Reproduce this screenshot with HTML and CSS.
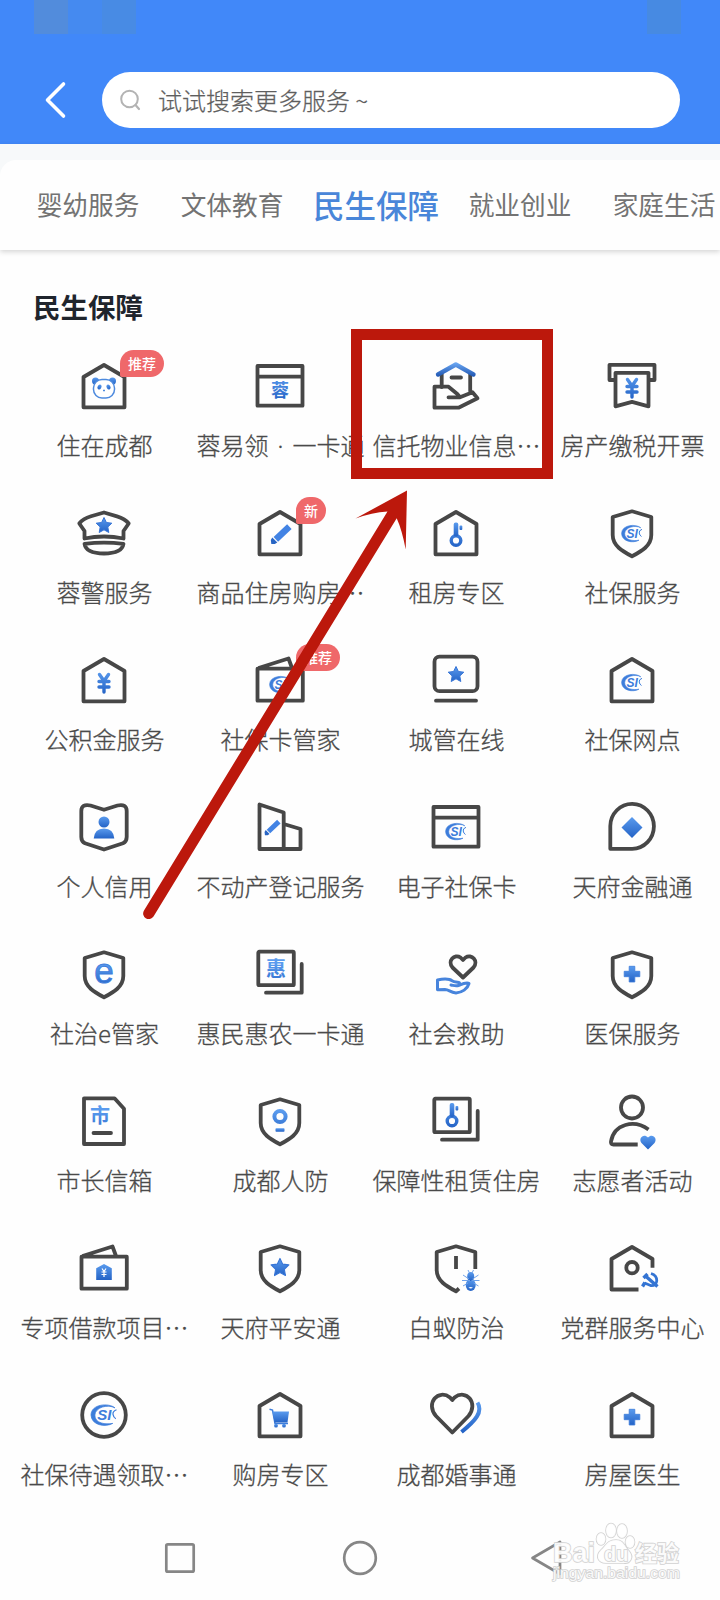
FILE: index.html
```html
<!DOCTYPE html>
<html lang="zh-CN">
<head>
<meta charset="utf-8">
<title>民生保障</title>
<link rel="stylesheet" href="styles.css">
</head>
<body>
<svg class="defs" width="0" height="0" aria-hidden="true">
  <defs>
    <linearGradient id="blue" x1="0" y1="0" x2="0" y2="1"><stop offset="0" stop-color="#5a9bee"/><stop offset="1" stop-color="#2463c6"/></linearGradient>
    <linearGradient id="blueBox" gradientUnits="userSpaceOnUse" x1="0" y1="20" x2="0" y2="44"><stop offset="0" stop-color="#5a9bee"/><stop offset="1" stop-color="#2463c6"/></linearGradient>
    <linearGradient id="roof" gradientUnits="userSpaceOnUse" x1="0" y1="7" x2="0" y2="20"><stop offset="0" stop-color="#6aa6f2"/><stop offset="1" stop-color="#2259b4"/></linearGradient>
    <symbol id="house" viewBox="0 0 64 64"><path class="ln" d="M32 9 52.500 21V51.300h-41V21z"/></symbol>
    <symbol id="shield" viewBox="0 0 64 64"><path class="ln" d="M32 8.300 51.300 14V32C51.300 43 41 48.500 32 53.300 23 48.500 12.700 43 12.700 32V14z"/></symbol>
    <symbol id="card" viewBox="0 0 64 64"><path class="ln" d="M9.500 10h45v39.700h-45zM9.500 20.700h45"/></symbol>
    <symbol id="wallet" viewBox="0 0 64 64"><path class="ln" d="M9.500 18.700h45.300v32H9.500zM10.500 18 40.500 8.500 44 18"/></symbol>
    <symbol id="stack" viewBox="0 0 64 64"><rect class="ln" x="10.300" y="7.700" width="35.500" height="33.500" rx="1"/><path class="ln" d="M53.700 20V48.700H18" stroke-linecap="round"/></symbol>
    <symbol id="yen" viewBox="0 0 64 64"><path class="bl" d="M27.500 24.500 32 31l4.500-6.500M32 31v11M27 31.500h10M27 37h10" stroke-linecap="round"/></symbol>
    <symbol id="star" viewBox="0 0 64 64"><path class="bf" d="M32 24.500l2.400 5 5.400.7-4 3.800 1 5.500-4.800-2.700-4.800 2.700 1-5.500-4-3.800 5.400-.7z" stroke="#3775d6" stroke-linejoin="round"/></symbol>
    <symbol id="plus" viewBox="0 0 64 64"><path class="bf" d="M29.200 24.300h5.600v5h5v5.400h-5v5.300h-5.600v-5.300h-5v-5.400h5z" stroke="#3c7cda" stroke-width=".8" stroke-linejoin="round"/></symbol>
    <symbol id="pencil" viewBox="0 0 64 64"><path d="M30.200 34.200 39 25.800" stroke="#4283e4" stroke-width="6.500" stroke-linecap="square"/><path d="M24.300 34.500l5 5-2.500 1.600h-3.500l-.5-4.200z" fill="#2865c4"/></symbol>
    <symbol id="key" viewBox="0 0 64 64"><circle class="bl" cx="32" cy="37.500" r="4.800" stroke-width="4"/><rect class="bf" x="29.700" y="19.500" width="4.600" height="14" rx="2"/><rect class="bf" x="35.500" y="22.500" width="2.800" height="4.500" rx="1"/></symbol>
    <symbol id="csi" viewBox="0 0 64 64"><path d="M40.800 26.800C36 22.600 21.700 23.500 21.600 32.500c.3 8.300 11.400 10 17.400 6.700-5.500 1-14.500.2-14.300-6.700C25 26.300 35 23.600 40.800 26.800z" fill="#3d7ddb" stroke="#3d7ddb" stroke-width=".6"/><text x="26.500" y="36.800" class="csi">SI</text><path d="M42 28.300Q38.800 29.500 39.200 32T41.500 35.500" fill="none" stroke="#3d7ddb" stroke-width="1"/></symbol>
  </defs>
</svg>

<div class="phone">
  <header class="header">
    <div class="mosaic"><i class="m1"></i><i class="m2"></i><i class="m3"></i><i class="m4"></i></div>
    <div class="search-row">
      <svg class="back" width="24" height="54" viewBox="0 0 24 54"><path d="M19.500 11 3.500 27 19.500 43" fill="none" stroke="#fff" stroke-width="3.600" stroke-linecap="round" stroke-linejoin="round"/></svg>
      <div class="search">
        <svg width="22" height="22" viewBox="0 0 22 22"><circle cx="9.500" cy="10" r="8.300" fill="none" stroke="#b3b3b3" stroke-width="2"/><path d="M15.500 16l3.500 4" stroke="#b3b3b3" stroke-width="2.200" stroke-linecap="round"/></svg>
        <span>试试搜索更多服务 ~</span>
      </div>
    </div>
  </header>
  <div class="tabs-wrap">
    <nav class="tabs">
      <span>婴幼服务</span><span>文体教育</span><span class="active">民生保障</span><span>就业创业</span><span>家庭生活</span>
    </nav>
  </div>
  <h2 class="title">民生保障</h2>

  <main class="grid">
    <div class="item"><svg class="icon" viewBox="0 0 64 64"><use href="#house"/><circle class="bf" cx="23.500" cy="25" r="3.500"/><circle class="bf" cx="40.500" cy="25" r="3.500"/><rect x="21.500" y="23.500" width="21" height="18.500" rx="8.500" fill="#fff" stroke="#4d8ade" stroke-width="1.500"/><ellipse class="bf" cx="27.500" cy="31" rx="1.900" ry="2.600" transform="rotate(30 27.500 31)"/><ellipse class="bf" cx="36.500" cy="31" rx="1.900" ry="2.600" transform="rotate(-30 36.500 31)"/><path d="M31 34.500h2" stroke="#4d8ade" stroke-width="1.500"/></svg><b class="badge">推荐</b><span class="label">住在成都</span></div>
    <div class="item"><svg class="icon" viewBox="0 0 64 64"><use href="#card"/><text x="32" y="41" class="glyph g18">蓉</text></svg><span class="label">蓉易领<i class="dot">·</i>一卡通</span></div>
    <div class="item"><svg class="icon" viewBox="0 0 64 64"><path class="ln" d="M17.700 18V31M46.200 18V35M27.500 21.500h9.500" stroke-linecap="round"/><path class="ln" d="M24.500 41.300H36L33.300 38 24.500 30.700H10.500V51.700H34.500L53.500 42.300 48.500 36.300 36 41.300" stroke-linecap="round"/><path class="roof" d="M14 18.500 31.800 8.500 49.500 18.500"/></svg><span class="label">信托物业信息…</span></div>
    <div class="item"><svg class="icon" viewBox="0 0 64 64"><path class="ln" d="M15 24H9.500V8.800H54.500V24H49"/><path class="ln" d="M15.500 16.800h33V50.300L32 45.800 15.500 50.300z"/><use href="#yen" y="-1"/></svg><span class="label">房产缴税开票</span></div>

    <div class="item"><svg class="icon" viewBox="0 0 64 64"><path class="ln" d="M32 9.500 19 13.300Q11 15.500 7.300 20.500L12.500 28V35.500Q32 31.500 51.500 35.500V28L56.700 20.500Q53 15.500 45 13.300z"/><path class="ln" d="M12.500 40.800Q32 38.300 51.500 40.800 50 50.500 32 50.500 14 50.500 12.500 40.800z"/><use href="#star" y="-10"/></svg><span class="label">蓉警服务</span></div>
    <div class="item"><svg class="icon" viewBox="0 0 64 64"><use href="#house"/><use href="#pencil"/></svg><b class="badge">新</b><span class="label">商品住房购房…</span></div>
    <div class="item"><svg class="icon" viewBox="0 0 64 64"><use href="#house"/><use href="#key"/></svg><span class="label">租房专区</span></div>
    <div class="item"><svg class="icon" viewBox="0 0 64 64"><use href="#shield"/><use href="#csi" y="-2"/></svg><span class="label">社保服务</span></div>

    <div class="item"><svg class="icon" viewBox="0 0 64 64"><use href="#house"/><use href="#yen"/></svg><span class="label">公积金服务</span></div>
    <div class="item"><svg class="icon" viewBox="0 0 64 64"><use href="#wallet"/><use href="#csi" y="2"/></svg><b class="badge">推荐</b><span class="label">社保卡管家</span></div>
    <div class="item"><svg class="icon" viewBox="0 0 64 64"><rect class="ln" x="10.500" y="6.700" width="43" height="34.500" rx="5"/><path class="ln" d="M12 50.700h40" stroke-linecap="round"/><use href="#star" y="-8"/></svg><span class="label">城管在线</span></div>
    <div class="item"><svg class="icon" viewBox="0 0 64 64"><use href="#house"/><use href="#csi"/></svg><span class="label">社保网点</span></div>

    <div class="item"><svg class="icon" viewBox="0 0 64 64"><path class="ln" d="M32 12.800 18.500 8.500Q9.300 6.500 9.300 14V40Q9.300 44.500 13 46.300L32 52.500 51 46.300Q54.700 44.500 54.700 40V14Q54.700 6.500 45.500 8.500z"/><circle class="bf" cx="32" cy="25" r="5.500"/><path class="bf" d="M21.700 41.500Q22.500 31.500 32 31.500T42.300 41.500z"/></svg><span class="label">个人信用</span></div>
    <div class="item"><svg class="icon" viewBox="0 0 64 64"><path class="ln" d="M11.500 7.500 35.700 15.500V52H11.500zM35.700 27 52.500 32V52H35.700"/><use href="#pencil" transform="translate(-1 6.500) scale(.77)"/></svg><span class="label">不动产登记服务</span></div>
    <div class="item"><svg class="icon" viewBox="0 0 64 64"><use href="#card"/><use href="#csi" y="2"/></svg><span class="label">电子社保卡</span></div>
    <div class="item"><svg class="icon" viewBox="0 0 64 64"><path class="ln" d="M10.300 51.800V29A21.800 22.500 0 1 1 32.200 51.800z"/><path class="bf" d="M32 20 42.500 30.500 32 41 21.500 30.500z"/></svg><span class="label">天府金融通</span></div>

    <div class="item"><svg class="icon" viewBox="0 0 64 64"><use href="#shield"/><text x="32" y="39.300" class="glyph latin">e</text></svg><span class="label">社治e管家</span></div>
    <div class="item"><svg class="icon" viewBox="0 0 64 64"><use href="#stack"/><text x="28" y="32" class="glyph g20">惠</text></svg><span class="label">惠民惠农一卡通</span></div>
    <div class="item"><svg class="icon" viewBox="0 0 64 64"><path class="ln" d="M39 33.500 28.500 23.500C23 17 30.500 9.500 36.500 13.500L39 16 41.500 13.500C47.500 9.500 55 17 49.500 23.500z"/><path class="palm" d="M27 41c3 .5 5 1.500 8 .3 3-1.300 8-3.300 10-1.800-1.500 5.500-7 9-13 9.500-6-.5-7-3.500-11-3.500l-7.500.3V36c4-1 8-1.700 12-.5 3 1 3 2.500 6.500 2.500 4 0 5 2 2 3.500"/></svg><span class="label">社会救助</span></div>
    <div class="item"><svg class="icon" viewBox="0 0 64 64"><use href="#shield"/><use href="#plus" y="-2"/></svg><span class="label">医保服务</span></div>

    <div class="item"><svg class="icon" viewBox="0 0 64 64"><path class="ln" d="M12 7.300H42.500L52 17.800V53H12z"/><path class="ln" d="M21.500 42h17.500" stroke-linecap="round"/><text x="28" y="31.500" class="glyph g20">市</text></svg><span class="label">市长信箱</span></div>
    <div class="item"><svg class="icon" viewBox="0 0 64 64"><use href="#shield"/><circle class="ring" cx="32" cy="25.500" r="5.600"/><rect class="bf" x="27.500" y="37.300" width="9" height="3.400" rx=".8"/></svg><span class="label">成都人防</span></div>
    <div class="item"><svg class="icon" viewBox="0 0 64 64"><use href="#stack"/><use href="#key" x="-4" y="-7.500"/></svg><span class="label">保障性租赁住房</span></div>
    <div class="item"><svg class="icon" viewBox="0 0 64 64"><circle class="ln" cx="32" cy="16.500" r="11"/><path class="ln" d="M48.500 38.500C34 28 14 33 11 50.500Q10.500 53.500 13.500 53.500H37.700"/><path class="bf" d="M48 58.500 41.500 52C38 47.500 43.500 42 48 46.500 52.500 42 58 47.500 54.500 52z"/></svg><span class="label">志愿者活动</span></div>

    <div class="item"><svg class="icon" viewBox="0 0 64 64"><use href="#wallet"/><path class="bf" d="M32 26l7.800 4.200V42H24.200V30.200z"/><path d="M30 30.500l2 3 2-3M32 33.500v5.500M29.500 34h5M29.500 36.500h5" fill="none" stroke="#fff" stroke-width="1.200"/></svg><span class="label">专项借款项目…</span></div>
    <div class="item"><svg class="icon" viewBox="0 0 64 64"><use href="#shield"/><use href="#star" transform="translate(-4.500 -7.500) scale(1.140)"/></svg><span class="label">天府平安通</span></div>
    <div class="item"><svg class="icon" viewBox="0 0 64 64"><path class="ln" d="M51.300 31V14L32 8.300 12.700 14V32C12.700 43 23 48.500 32 53.300L35 50.500M32 18V31"/><ellipse class="bf" cx="46.700" cy="47" rx="5" ry="6"/><ellipse class="bf" cx="46.700" cy="38.500" rx="3.500" ry="4.500"/><path d="M44 32l1.500 3M49.500 32 48 35M39 37l6 4M54.500 37l-6 4M38 42.500h8M55.500 42.500h-8M39 48l5-3M54.500 48l-5-3" stroke="#6fa2ea" stroke-width="1"/><path d="M44.500 49.500q2.200-1.200 4.400 0-2.200 1.800-4.400 0z" fill="#fff"/></svg><span class="label">白蚁防治</span></div>
    <div class="item"><svg class="icon" viewBox="0 0 64 64"><path class="ln" d="M52.500 29.700V21L32 9 11.500 21V51.500H38.500"/><circle class="ln" cx="32" cy="29.700" r="5.700"/><path d="M51 35.500C59 38 58.500 48.500 50.500 47.500L44.500 45" fill="none" stroke="#3474d3" stroke-width="2.800"/><path d="M43.500 40 47.500 36M45.500 38 57.500 48.500M45 44.500 42.500 48.500" stroke="#3474d3" stroke-width="3.400"/></svg><span class="label">党群服务中心</span></div>

    <div class="item"><svg class="icon" viewBox="0 0 64 64"><circle class="ln" cx="32" cy="30" r="21.800"/><use href="#csi" transform="translate(-8 -10.600) scale(1.250)"/></svg><span class="label">社保待遇领取…</span></div>
    <div class="item"><svg class="icon" viewBox="0 0 64 64"><use href="#house"/><path d="M21.500 24.300l3 .8 2.500 13.500h13" fill="none" stroke="#3c7cda" stroke-width="1.500"/><path class="bf" d="M24.500 26.500H41L39.500 37.500H26.500z"/><circle class="bf" cx="28" cy="40.700" r="1.900"/><circle class="bf" cx="36" cy="40.700" r="1.900"/></svg><span class="label">购房专区</span></div>
    <div class="item"><svg class="icon" viewBox="0 0 64 64"><path class="ln" d="M28.300 47.500 12 31C1 18 14.500 3.500 26 12.500L28.300 15 30.500 12.500C42 3.500 55 18 44.500 31z"/><path class="arc" d="M53.500 17.500C59.500 27 51 36 37.500 47"/></svg><span class="label">成都婚事通</span></div>
    <div class="item"><svg class="icon" viewBox="0 0 64 64"><use href="#house"/><use href="#plus"/></svg><span class="label">房屋医生</span></div>
  </main>

  <footer class="navbar">
    <svg width="36" height="36" viewBox="0 0 36 36"><rect x="4.300" y="4.300" width="27.400" height="27.400" rx="1.500"/></svg>
    <svg width="36" height="36" viewBox="0 0 36 36"><circle cx="18" cy="18" r="15.800"/></svg>
    <svg width="36" height="36" viewBox="0 0 36 36"><path d="M31 2V34L3.500 18z"/></svg>
  </footer>

  <svg class="watermark" width="136" height="64" viewBox="0 0 136 64">
    <g class="wm">
      <text x="7" y="41" class="wm-big" textLength="42" lengthAdjust="spacingAndGlyphs">Bai</text>
      <ellipse cx="55" cy="18" rx="4.500" ry="6"/><ellipse cx="65" cy="9.500" rx="5" ry="7"/><ellipse cx="76" cy="10" rx="5" ry="7"/><ellipse cx="84" cy="21" rx="4.500" ry="6"/>
      <path d="M70 19c8 0 8 6 13 11 6 7 0 13-5 12H60c-8 0-11-7-5-13 5-4 6-10 15-10z"/>
      <text x="58" y="40" class="wm-du">du</text>
      <text x="89" y="40" class="wm-cn">经验</text>
      <text x="7" y="57" class="wm-url" textLength="127" lengthAdjust="spacingAndGlyphs">jingyan.baidu.com</text>
    </g>
  </svg>

  <div class="frame"></div>
  <svg class="arrow" width="720" height="1600" viewBox="0 0 720 1600"><path d="M407 490.500 355.500 518.500Q372 512.500 387.500 511.500L144 910.500A5.600 5.600 0 0 0 153.500 916.500L396.700 518.300Q402 530 405.700 549.500z"/></svg>
</div>
</body>
</html>
```
FILE: styles.css
```css
* { box-sizing: border-box; }
body {
  margin: 0;
  background: #fefefe;
  font-family: "Noto Sans CJK SC", "Noto Sans", sans-serif;
}
i { font-style: normal; }
.defs { position: absolute; }
.phone { position: relative; width: 720px; height: 1600px; overflow: hidden; }

.header { height: 144px; background: #4188f9; }
.mosaic { display: flex; height: 34px; padding-left: 34px; }
.mosaic i { width: 34px; height: 34px; }
.m1 { background: #528cdc; }
.m2 { background: #458af0; }
.m3 { background: #488be4; }
.mosaic .m4 { margin-left: 511px; background: #478ae2; }
.search-row { display: flex; align-items: center; padding: 38px 40px 0 44px; gap: 34px; }
.back { flex: none; }
.search {
  flex: 1;
  display: flex;
  align-items: center;
  gap: 16px;
  height: 56px;
  padding-left: 18px;
  border-radius: 28px;
  background: #fff;
  color: #5e5e5e;
  font-size: 24px;
  font-weight: 300;
  -webkit-text-stroke: .25px currentColor;
}
.search span { line-height: 36px; }

.tabs-wrap { height: 106px; padding-top: 16px; background: #f7f9fa; box-shadow: 0 2px 5px rgba(0, 0, 0, .16); }
.tabs {
  display: grid;
  grid-template-columns: repeat(5, 144px);
  align-items: center;
  width: 752px;
  height: 90px;
  padding: 0 0 3px 16px;
  border-radius: 16px 16px 0 0;
  background: #fefefe;
  text-align: center;
  white-space: nowrap;
  font-size: 25.7px;
  color: #737373;
}
.tabs .active { font-size: 31.5px; font-weight: 500; color: #4986d9; }

.title { margin: 38px 0 32px 33px; line-height: 36px; font-size: 27.5px; font-weight: 700; color: #1f252d; }

.grid { display: grid; grid-template-columns: repeat(4, 176px); grid-auto-rows: 147px; padding-left: 16px; }
.item { position: relative; display: flex; flex-direction: column; align-items: center; gap: 7px; }
.icon { display: block; width: 64px; height: 64px; overflow: visible; }
.label {
  line-height: 36px;
  padding-left: 1px;
  font-size: 24px;
  font-weight: 300;
  color: #4a4a4a;
  white-space: nowrap;
  -webkit-text-stroke: .3px currentColor;
}
.dot { display: inline-block; width: 24px; text-align: center; font-family: "Noto Sans", sans-serif; }
.badge {
  position: absolute;
  left: 104px;
  top: -6px;
  height: 27px;
  padding: 0 8px;
  border-radius: 14px 14px 14px 2px;
  background: #ef686a;
  color: #fff;
  font-size: 14px;
  font-weight: 500;
  line-height: 27px;
}

.ln { fill: none; stroke: #474747; stroke-width: 3.8; stroke-linejoin: round; }
.bl { fill: none; stroke: url(#blueBox); stroke-width: 3.4; stroke-linejoin: round; }
.bf { fill: url(#blue); }
.ring { fill: none; stroke: url(#blueBox); stroke-width: 4; }
.roof { fill: none; stroke: url(#roof); stroke-width: 4.4; stroke-linecap: round; stroke-linejoin: round; }
.arc { fill: none; stroke: url(#blue); stroke-width: 4; }
.palm { fill: none; stroke: #4784dc; stroke-width: 3; stroke-linejoin: round; stroke-linecap: round; }
.glyph { fill: url(#blueBox); text-anchor: middle; font-weight: 500; }
.g18 { font-size: 18px; font-weight: 700; }
.g20 { font-size: 20px; font-weight: 700; }
.latin { font: 400 35px "Liberation Sans", sans-serif; stroke: #3d7ddb; stroke-width: .9; }
.csi { font: italic 700 12px "Liberation Sans", sans-serif; fill: #3d7ddb; }

.navbar { display: flex; align-items: center; gap: 144px; height: 52px; padding-left: 162px; }
.navbar svg { flex: none; fill: none; stroke: #868686; stroke-width: 2.7; stroke-linejoin: round; }
.navbar svg:last-child { margin-left: 7px; }

.watermark { position: absolute; left: 546px; top: 1521px; }
.wm { fill: #fff; fill-opacity: .9; stroke: #d2d2d2; stroke-width: 1.6; paint-order: stroke; }
.wm-big { font: 700 28px "Liberation Sans", sans-serif; }
.wm-du { font: 700 20px "Liberation Sans", sans-serif; }
.wm-cn { font-size: 22px; font-weight: 700; }
.wm-url { font: 15px "Liberation Sans", sans-serif; }

.frame { position: absolute; left: 351px; top: 329px; width: 202px; height: 150px; border: 11px solid #bc180c; }
.arrow { position: absolute; left: 0; top: 0; fill: #bc180c; }
```
